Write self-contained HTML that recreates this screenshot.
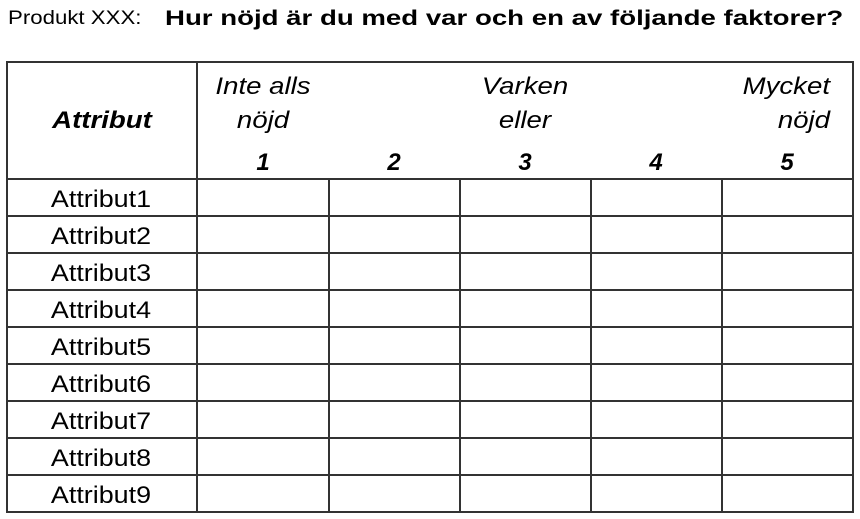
<!DOCTYPE html>
<html><head><style>
body{margin:0;width:860px;height:519px;background:#fff;position:relative;font-family:"Liberation Sans",Arial,sans-serif;color:#000;overflow:hidden}
.a{position:absolute;white-space:nowrap}
.h{position:absolute;background:#333;height:2px}
.v{position:absolute;background:#333;width:2px}
.c{text-align:center;font-style:italic;font-size:24px;line-height:34px}
.s{transform:scaleX(1.15);transform-origin:center}
.n{font-size:24px;font-weight:bold;line-height:29px}
.r{font-size:24px;width:190px;text-align:center;transform:scaleX(1.12);transform-origin:center}
</style></head><body>
<div class="a" style="left:8px;top:8px;font-size:19px;transform:scaleX(1.17);transform-origin:left">Produkt XXX:</div>
<div class="a" style="left:165px;top:7px;font-size:21px;font-weight:bold;transform:scaleX(1.315);transform-origin:left">Hur nöjd är du med var och en av följande faktorer?</div>
<div class="h" style="left:6px;top:61px;width:848px"></div>
<div class="h" style="left:6px;top:178px;width:848px"></div>
<div class="v" style="left:6px;top:61px;height:452px"></div>
<div class="v" style="left:196px;top:61px;height:452px"></div>
<div class="v" style="left:852px;top:61px;height:452px"></div>
<div class="v" style="left:328px;top:179px;height:334px"></div>
<div class="v" style="left:459px;top:179px;height:334px"></div>
<div class="v" style="left:590px;top:179px;height:334px"></div>
<div class="v" style="left:721px;top:179px;height:334px"></div>
<div class="a s" style="left:8px;top:107px;width:188px;text-align:center;font-size:24px;font-weight:bold;font-style:italic">Attribut</div>
<div class="a c s" style="left:198px;top:70px;width:130px">Inte alls<br>nöjd</div>
<div class="a c s" style="left:460px;top:70px;width:130px">Varken<br>eller</div>
<div class="a c" style="left:700px;top:70px;width:130px;text-align:right;transform:scaleX(1.15);transform-origin:right">Mycket<br>nöjd</div>
<div class="a c n" style="left:198px;top:148px;width:130px">1</div>
<div class="a c n" style="left:329px;top:148px;width:130px">2</div>
<div class="a c n" style="left:460px;top:148px;width:130px">3</div>
<div class="a c n" style="left:591px;top:148px;width:130px">4</div>
<div class="a c n" style="left:722px;top:148px;width:130px">5</div>
<div class="h" style="left:6px;top:215px;width:848px"></div>
<div class="h" style="left:6px;top:252px;width:848px"></div>
<div class="h" style="left:6px;top:289px;width:848px"></div>
<div class="h" style="left:6px;top:326px;width:848px"></div>
<div class="h" style="left:6px;top:363px;width:848px"></div>
<div class="h" style="left:6px;top:400px;width:848px"></div>
<div class="h" style="left:6px;top:437px;width:848px"></div>
<div class="h" style="left:6px;top:474px;width:848px"></div>
<div class="h" style="left:6px;top:511px;width:848px"></div>
<div class="a r" style="left:6px;top:186px">Attribut1</div>
<div class="a r" style="left:6px;top:223px">Attribut2</div>
<div class="a r" style="left:6px;top:260px">Attribut3</div>
<div class="a r" style="left:6px;top:297px">Attribut4</div>
<div class="a r" style="left:6px;top:334px">Attribut5</div>
<div class="a r" style="left:6px;top:371px">Attribut6</div>
<div class="a r" style="left:6px;top:408px">Attribut7</div>
<div class="a r" style="left:6px;top:445px">Attribut8</div>
<div class="a r" style="left:6px;top:482px">Attribut9</div>
</body></html>
